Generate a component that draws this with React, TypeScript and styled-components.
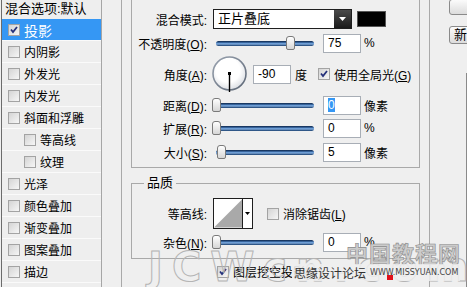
import React from 'react'
import styled, { createGlobalStyle } from 'styled-components'

const GlobalStyle = createGlobalStyle`
  html, body {
    margin: 0;
    padding: 0;
    background: #efefef;
  }
  body {
    font-family: "Liberation Sans", "Noto Sans CJK SC", sans-serif;
    font-size: 12px;
    color: #000;
  }
`

const Dialog = styled.div`
  position: relative;
  width: 467px;
  height: 287px;
  overflow: hidden;
  display: flex;
  background: #efefef;
`

// ---- left style list ----

const StyleList = styled.div`
  flex: none;
  width: 99px;
  margin-left: 1px;
  border-left: 1px solid #6c6c6c;
  border-right: 1px solid #a6a6a6;
  background: #eeeeee;
`

const ListHeader = styled.div`
  height: 19px;
  line-height: 18px;
  padding-left: 3px;
  font-size: 13px;
  white-space: nowrap;
`

const ListItem = styled.div<{ $selected?: boolean; $indent?: boolean }>`
  display: flex;
  align-items: center;
  height: 21px;
  border-bottom: 1px solid #fafafa;
  padding-left: ${(p) => (p.$indent ? 22 : 6)}px;
  gap: 4px;
  background: ${(p) => (p.$selected ? '#3597f4' : 'transparent')};
  color: ${(p) => (p.$selected ? '#fff' : '#000')};
  font-size: ${(p) => (p.$selected ? 14 : 12)}px;
`

const Box = styled.span`
  position: relative;
  flex: none;
  display: inline-block;
  width: 10px;
  height: 10px;
  border: 1px solid #a3a3a3;
  background: linear-gradient(135deg, #d4d4d4, #f6f6f6);

  svg {
    position: absolute;
    left: 0;
    top: 0;
  }
`

const CheckBox = ({ checked }: { checked?: boolean }) => (
  <Box>
    {checked && (
      <svg width="10" height="10" viewBox="0 0 10 10">
        <path d="M2 4.5 L4 7 L8 2" fill="none" stroke="#25307a" strokeWidth="1.8" />
      </svg>
    )}
  </Box>
)

// ---- right settings area ----

const SettingsArea = styled.div`
  flex: none;
  margin-left: 19px;
  width: 309px;
  box-sizing: border-box;
  border-left: 1px solid #a9a9a9;
  border-right: 1px solid #a9a9a9;
  padding: 0 9px;
`

const StructureBox = styled.div`
  height: 168px;
  box-sizing: border-box;
  border: 1px solid #a9a9a9;
  border-top: none;
  padding-top: 8px;
`

const QualityBox = styled.fieldset`
  margin: 7px 0 0;
  padding: 6px 0 4px;
  border: 1px solid #a9a9a9;
  min-width: 0;
`

const Legend = styled.legend`
  margin-left: 12px;
  padding: 0 3px;
  line-height: 16px;
  font-size: 13px;
`

const Row = styled.div<{ $h: number; $pad?: number }>`
  display: flex;
  align-items: center;
  height: ${(p) => p.$h}px;
  padding-left: ${(p) => p.$pad ?? 0}px;
  white-space: nowrap;
`

const Label = styled.span`
  flex: none;
  width: 75px;
  text-align: right;
`

const Select = styled.div`
  flex: none;
  display: flex;
  margin-left: 6px;
  width: 139px;
  height: 20px;
  box-sizing: border-box;
  border: 1px solid #1e1e1e;
  background: #fff;
`

const SelectText = styled.span`
  flex: 1;
  padding-left: 4px;
  line-height: 18px;
  font-size: 13px;
`

const SelectButton = styled.span`
  flex: none;
  width: 17px;
  display: flex;
  align-items: center;
  justify-content: center;
  background: linear-gradient(#4a4a4a, #1a1a1a);
`

const Swatch = styled.span`
  flex: none;
  margin-left: 5px;
  width: 29px;
  height: 16px;
  box-sizing: border-box;
  border: 1px solid #555;
  background: #000;
`

const SliderWrap = styled.div`
  position: relative;
  flex: none;
  width: 106px;
  height: 14px;
  margin-left: 5px;
`

const Track = styled.div`
  position: absolute;
  left: 4px;
  right: 4px;
  top: 5px;
  height: 5px;
  border-radius: 3px;
  background: linear-gradient(#0a2247, #4d84c4 45%, #8db6e6 55%, #143b6c);
`

const Thumb = styled.div`
  position: absolute;
  top: 0;
  width: 9px;
  height: 14px;
  margin-left: -4px;
  box-sizing: border-box;
  border: 1px solid #7a7a7a;
  border-radius: 3px 3px 2px 2px;
  background: linear-gradient(#ffffff, #d6d6d6);
`

const Slider = ({ value, max = 100 }: { value: number; max?: number }) => (
  <SliderWrap>
    <Track />
    <Thumb style={{ left: 4 + (value / max) * 98 }} />
  </SliderWrap>
)

const Field = styled.span<{ $gap?: number }>`
  flex: none;
  margin-left: ${(p) => p.$gap ?? 5}px;
  width: 38px;
  height: 19px;
  box-sizing: border-box;
  border: 1px solid #a8aeb6;
  background: #fff;
  padding-left: 4px;
  line-height: 17px;
  font-size: 12px;
`

const Selected = styled.span`
  background: #3597f4;
  color: #fff;
`

const Unit = styled.span<{ $gap?: number }>`
  margin-left: ${(p) => p.$gap ?? 3}px;
`

const Check = styled.span<{ $gap: number }>`
  display: flex;
  align-items: center;
  gap: 4px;
  margin-left: ${(p) => p.$gap}px;
`

const DialBox = styled.span`
  flex: none;
  display: flex;
  margin-left: 5px;
`

const Dial = () => (
  <DialBox>
    <svg width="36" height="36" viewBox="0 0 36 36">
      <defs>
        <radialGradient id="dialFill" cx="0.45" cy="0.4" r="0.6">
          <stop offset="0.6" stopColor="#ffffff" />
          <stop offset="1" stopColor="#dcdfe4" />
        </radialGradient>
        <linearGradient id="dialRing" x1="0" y1="0" x2="1" y2="1">
          <stop offset="0" stopColor="#9aa3b0" />
          <stop offset="1" stopColor="#5c6675" />
        </linearGradient>
      </defs>
      <circle cx="17.5" cy="17.5" r="16.5" fill="url(#dialFill)" stroke="url(#dialRing)" strokeWidth="1.6" />
      <line x1="17.5" y1="17.5" x2="17.5" y2="36" stroke="#000" strokeWidth="1.4" />
      <rect x="16" y="16" width="3" height="3" fill="#000" />
    </svg>
  </DialBox>
)

const ContourPicker = styled.span`
  flex: none;
  display: flex;
  margin-left: 6px;
  width: 40px;
  height: 31px;
  box-sizing: border-box;
  border: 1px solid #1e1e1e;
  background: #fff;
`

const ContourArrow = styled.span`
  flex: none;
  width: 9px;
  display: flex;
  align-items: center;
  justify-content: center;
  border-left: 1px solid #1e1e1e;
`

const Contour = () => (
  <ContourPicker>
    <svg width="29" height="29" viewBox="0 0 29 29">
      <polygon points="0,29 29,0 29,29" fill="#a9a9a9" />
    </svg>
    <ContourArrow>
      <svg width="5" height="3" viewBox="0 0 5 3">
        <polygon points="0,0 5,0 2.5,3" fill="#000" />
      </svg>
    </ContourArrow>
  </ContourPicker>
)

// ---- buttons on the far right ----

const ButtonColumn = styled.div`
  flex: none;
  margin-left: 19px;
  display: flex;
  flex-direction: column;
`

const Button = styled.div<{ $top: number }>`
  margin-top: ${(p) => p.$top}px;
  width: 80px;
  height: 18px;
  box-sizing: border-box;
  border: 1px solid #8a8a8a;
  border-radius: 3px;
  background: linear-gradient(#fbfbfb, #dcdcdc);
  padding-left: 4px;
  line-height: 16px;
  font-size: 13px;
`

const Preview = styled.div`
  margin: 29px 0 0 17px;
  width: 60px;
  height: 240px;
  border-left: 1px solid #8a8a8a;
`

// ---- watermark laid over the bottom of the dialog ----

const Watermark = styled.div`
  position: absolute;
  left: 0;
  top: 0;
  width: 100%;
  height: 100%;
  pointer-events: none;
`

const MarkTitle = styled.span`
  position: absolute;
  left: 346px;
  top: 236px;
  font-family: "Noto Sans CJK SC", sans-serif;
  font-size: 22px;
  font-weight: bold;
  letter-spacing: 1px;
  color: #cccccc;
  -webkit-text-stroke: 0.6px #8a8a8a;
`

const MarkBig = styled.span`
  position: absolute;
  left: 148px;
  top: 244px;
  font-family: "DejaVu Sans", sans-serif;
  font-size: 40px;
  font-weight: bold;
  letter-spacing: 9px;
  color: transparent;
  -webkit-text-stroke: 1px #b4b4b4;
`

const MarkSite = styled.span`
  position: absolute;
  left: 292px;
  top: 264px;
  display: flex;
  align-items: center;
  gap: 4px;
  padding: 0 2px;
  background: rgba(239, 239, 239, 0.85);
  font-family: "Noto Sans CJK SC", sans-serif;
  font-size: 12px;
  color: #333;
`

const MarkUrl = styled.span`
  font-family: "DejaVu Sans", sans-serif;
  font-size: 8px;
  color: #444;
`

const RedDot = styled.span`
  position: absolute;
  left: 387px;
  top: 275px;
  width: 6px;
  height: 5px;
  background: #e0101a;
`

const styles = [
  { name: '内阴影' },
  { name: '外发光' },
  { name: '内发光' },
  { name: '斜面和浮雕' },
  { name: '等高线', indent: true },
  { name: '纹理', indent: true },
  { name: '光泽' },
  { name: '颜色叠加' },
  { name: '渐变叠加' },
  { name: '图案叠加' },
  { name: '描边' },
]

export default function App() {
  return (
    <>
      <GlobalStyle />
      <Dialog>
        <StyleList>
          <ListHeader>混合选项:默认</ListHeader>
          <ListItem $selected>
            <CheckBox checked />
            <span>投影</span>
          </ListItem>
          {styles.map((s) => (
            <ListItem key={s.name} $indent={s.indent}>
              <CheckBox />
              <span>{s.name}</span>
            </ListItem>
          ))}
        </StyleList>

        <SettingsArea>
          <StructureBox>
            <Row $h={22}>
              <Label>混合模式:</Label>
              <Select>
                <SelectText>正片叠底</SelectText>
                <SelectButton>
                  <svg width="7" height="4" viewBox="0 0 7 4">
                    <polygon points="0,0 7,0 3.5,4" fill="#fff" />
                  </svg>
                </SelectButton>
              </Select>
              <Swatch />
            </Row>
            <Row $h={26}>
              <Label>不透明度(<u>O</u>):</Label>
              <Slider value={75} />
              <Field>75</Field>
              <Unit>%</Unit>
            </Row>
            <Row $h={36}>
              <Label>角度(<u>A</u>):</Label>
              <Dial />
              <Field $gap={5}>-90</Field>
              <Unit $gap={4}>度</Unit>
              <Check $gap={11}>
                <CheckBox checked />
                <span>使用全局光(<u>G</u>)</span>
              </Check>
            </Row>
            <Row $h={26}>
              <Label>距离(<u>D</u>):</Label>
              <Slider value={0} />
              <Field>
                <Selected>0</Selected>
              </Field>
              <Unit>像素</Unit>
            </Row>
            <Row $h={20}>
              <Label>扩展(<u>R</u>):</Label>
              <Slider value={0} />
              <Field>0</Field>
              <Unit>%</Unit>
            </Row>
            <Row $h={28}>
              <Label>大小(<u>S</u>):</Label>
              <Slider value={5} />
              <Field>5</Field>
              <Unit>像素</Unit>
            </Row>
          </StructureBox>

          <QualityBox>
            <Legend>品质</Legend>
            <Row $h={33}>
              <Label>等高线:</Label>
              <Contour />
              <Check $gap={14}>
                <CheckBox />
                <span>消除锯齿(<u>L</u>)</span>
              </Check>
            </Row>
            <Row $h={24}>
              <Label>杂色(<u>N</u>):</Label>
              <Slider value={0} />
              <Field>0</Field>
              <Unit>%</Unit>
            </Row>
          </QualityBox>

          <Row $h={25} $pad={86}>
            <Check $gap={0}>
              <CheckBox checked />
              <span>图层挖空投影(<u>U</u>)</span>
            </Check>
          </Row>
        </SettingsArea>

        <ButtonColumn>
          <Button $top={-1} />
          <Button $top={11}>新</Button>
          <Preview />
        </ButtonColumn>

        <Watermark>
          <MarkBig>JCWcn.com</MarkBig>
          <MarkTitle>中国教程网</MarkTitle>
          <MarkSite>
            思缘设计论坛
            <MarkUrl>WWW.MISSYUAN.COM</MarkUrl>
          </MarkSite>
          <RedDot />
        </Watermark>
      </Dialog>
    </>
  )
}
